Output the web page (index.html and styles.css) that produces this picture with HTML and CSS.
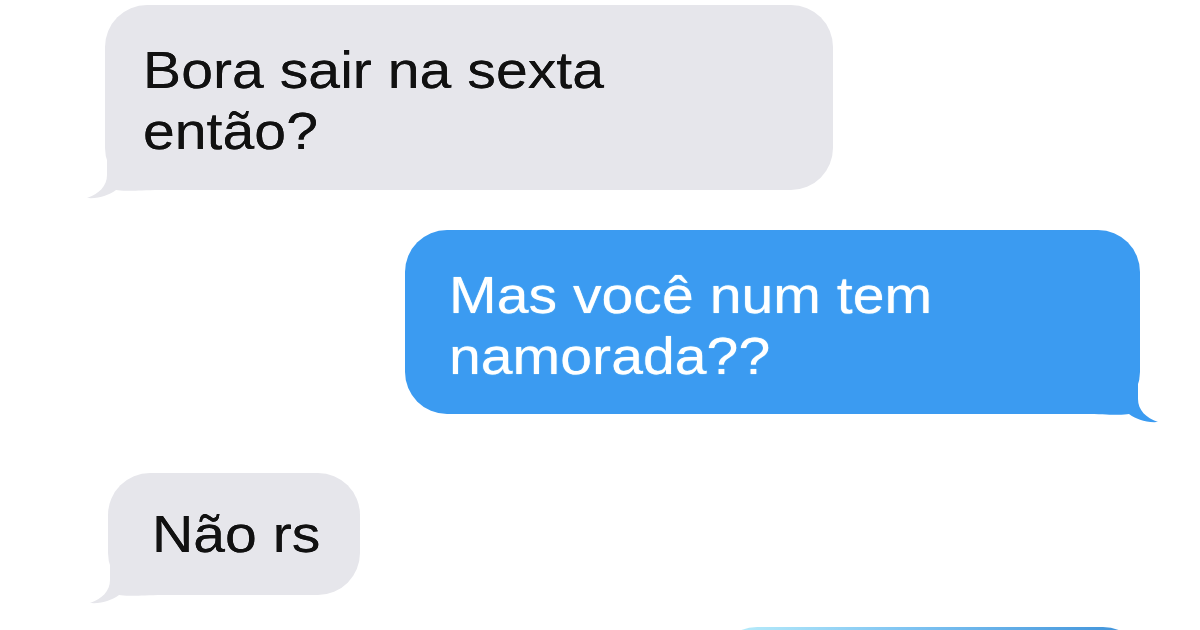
FILE: index.html
```html
<!DOCTYPE html>
<html lang="pt">
<head>
<meta charset="utf-8">
<title>Conversa</title>
<link rel="stylesheet" href="styles.css">
</head>
<body>
<div class="chat">
  <div class="bubble in b1">
    <p class="msg">Bora sair na sexta<br>então?</p>
    <svg class="tail tail-in" viewBox="0 0 70 40" aria-hidden="true"><path d="M22 0 L22 16 C22 27 14 35 2 39 C14 40 24 36 31 31 C36 32 44 32 70 31 L70 0 Z"/></svg>
  </div>
  <div class="bubble out b2">
    <p class="msg">Mas você num tem<br>namorada??</p>
    <svg class="tail tail-out" viewBox="0 0 70 40" aria-hidden="true"><path d="M48 0 L48 16 C48 27 56 35 68 39 C56 40 46 36 39 31 C34 32 26 32 0 31 L0 0 Z"/></svg>
  </div>
  <div class="bubble in b3">
    <p class="msg">Não rs</p>
    <svg class="tail tail-in" viewBox="0 0 70 40" aria-hidden="true"><path d="M22 0 L22 16 C22 27 14 35 2 39 C14 40 24 36 31 31 C36 32 44 32 70 31 L70 0 Z"/></svg>
  </div>
  <div class="bubble out b4"></div>
</div>
</body>
</html>
```

FILE: styles.css
```css
html, body {
  margin: 0;
  padding: 0;
  background: #ffffff;
  width: 1200px;
  height: 630px;
  overflow: hidden;
}

.chat {
  display: flex;
  flex-direction: column;
  padding-top: 5px;
  font-family: "Liberation Sans", Arial, sans-serif;
}

.bubble {
  position: relative;
  box-sizing: border-box;
  border-radius: 42px;
}

.msg {
  position: relative;
  z-index: 1;
  margin: 0;
  font-size: 52px;
  line-height: 61px;
  white-space: nowrap;
  transform: scaleX(1.1);
  transform-origin: left top;
}

.in {
  align-self: flex-start;
  background: #e6e6eb;
  color: #111111;
}

.out {
  align-self: flex-end;
  background: #3b9bf1;
  color: #ffffff;
}

.tail {
  position: absolute;
  width: 70px;
  height: 40px;
  bottom: -9px;
}

.tail-in {
  left: -20px;
  fill: #e6e6eb;
}

.tail-out {
  right: -20px;
  fill: #3b9bf1;
}

.b1 {
  margin-left: 105px;
  width: 728px;
  padding: 35px 38px 28px;
}

.b1 .msg,
.b3 .msg {
  text-shadow: 0 0 0.6px #111111;
}

.b2 {
  margin-top: 40px;
  margin-right: 60px;
  width: 735px;
  padding: 35px 44px 27px;
}

.b2 .msg {
  text-shadow: 0 0 1px #d8fbff;
}

.b3 {
  margin-top: 59px;
  margin-left: 108px;
  width: 252px;
  padding: 31px 44px 30px;
}

.b4 {
  margin-top: 32px;
  margin-right: 55px;
  width: 430px;
  height: 120px;
  background: linear-gradient(90deg, #bdf0fb 0%, #7fc4f2 45%, #3b8fd8 100%);
}
```
